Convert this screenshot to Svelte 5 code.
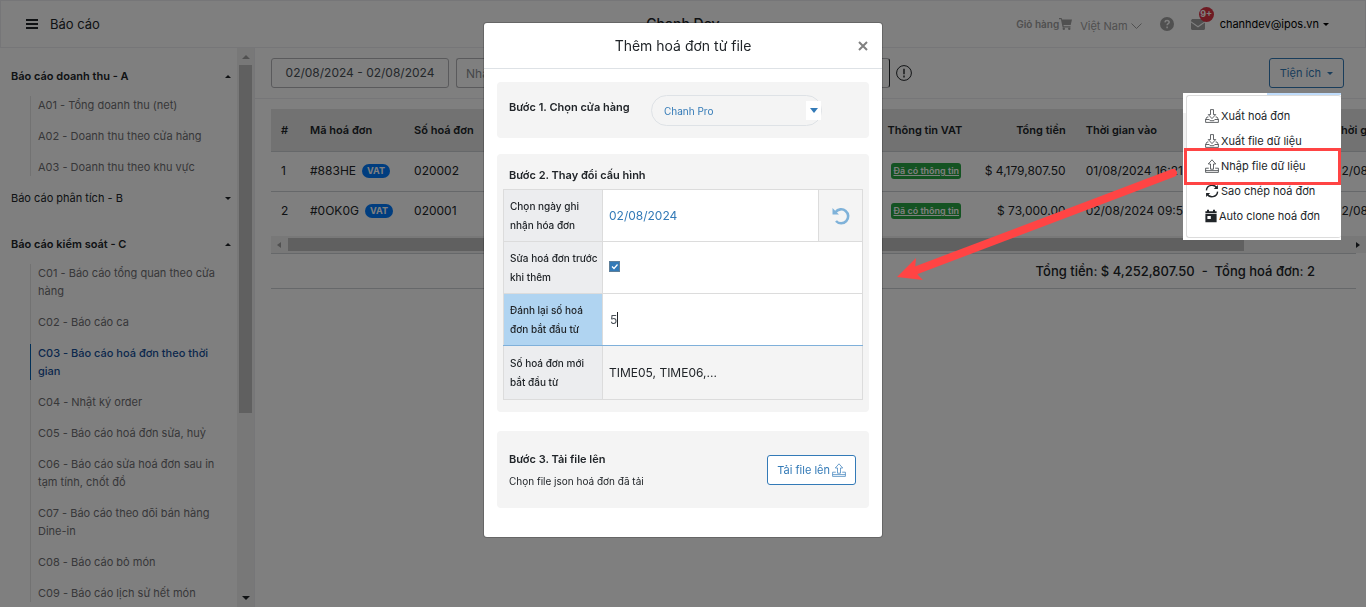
<script>
  const sections = [
    {
      title: 'Báo cáo doanh thu - A',
      open: true,
      items: ['A01 - Tổng doanh thu (net)', 'A02 - Doanh thu theo cửa hàng', 'A03 - Doanh thu theo khu vực']
    },
    { title: 'Báo cáo phân tích - B', open: false, items: [] },
    {
      title: 'Báo cáo kiểm soát - C',
      open: true,
      items: [
        'C01 - Báo cáo tổng quan theo cửa hàng',
        'C02 - Báo cáo ca',
        'C03 - Báo cáo hoá đơn theo thời gian',
        'C04 - Nhật ký order',
        'C05 - Báo cáo hoá đơn sửa, huỷ',
        'C06 - Báo cáo sửa hoá đơn sau in tạm tính, chốt đồ',
        'C07 - Báo cáo theo dõi bán hàng Dine-in',
        'C08 - Báo cáo bỏ món',
        'C09 - Báo cáo lịch sử hết món'
      ]
    }
  ];
  const active = 'C03 - Báo cáo hoá đơn theo thời gian';

  const rows = [
    { code: '#883HE', number: '020002', total: '$ 4,179,807.50', timeIn: '01/08/2024 16:21', timeOut: '02/08/2024 09:54' },
    { code: '#0OK0G', number: '020001', total: '$ 73,000.00', timeIn: '02/08/2024 09:55', timeOut: '02/08/2024 09:55' }
  ];

  const tools = [
    { icon: 'download', label: 'Xuất hoá đơn' },
    { icon: 'download', label: 'Xuất file dữ liệu' },
    { icon: 'upload', label: 'Nhập file dữ liệu', marked: true },
    { icon: 'sync', label: 'Sao chép hoá đơn' },
    { icon: 'calendar', label: 'Auto clone hoá đơn' }
  ];

  let editBefore = $state(true);
  let startNumber = $state('5');
</script>

{#snippet icon(name)}
  {#if name === 'download'}
    <svg class="ico" viewBox="0 0 14 14" fill="none" stroke="currentColor" stroke-width="0.7">
      <path d="M5.500 .6h3v5h2.200L7 9.600 3.300 5.600h2.200z" />
      <path d="M3.400 8H2L.6 10.500v2.900h12.800v-2.900L12 8h-1.400M.6 10.500h3.600l1 1.200h3.600l1-1.200h3.600" />
    </svg>
  {:else if name === 'upload'}
    <svg class="ico" viewBox="0 0 14 14" fill="none" stroke="currentColor" stroke-width="0.7">
      <path d="M5.500 10.200V5H3.300L7 .8 10.700 5H8.500v5.200z" />
      <path d="M3.800 9.200H.6v4.200h12.800V9.200h-3.200M.6 11.600h12.800" />
    </svg>
  {:else if name === 'sync'}
    <svg class="ico" viewBox="0 0 14 14" fill="none" stroke="currentColor" stroke-width="1.400">
      <path d="M1.400 6.400A5.600 5.600 0 0 1 12 4.400M12.600 7.600A5.600 5.600 0 0 1 2 9.600" />
      <path d="M12.900 1v4.100H8.800zM1.100 13V8.900h4.100z" fill="currentColor" stroke="none" />
    </svg>
  {:else}
    <svg class="ico narrow" viewBox="1 0 12 14" fill="currentColor">
      <path fill-rule="evenodd" d="M3 .8h2v1.400h4V.8h2v1.400h1.600V4H1.400V2.200H3zM1.400 4.800h11.200v8.400H1.400zM3.400 7v3h3.400V7z" />
    </svg>
  {/if}
{/snippet}

<div class="page">
  <header class="topbar">
    <div class="side">
      <button class="plain" aria-label="Menu">
        <svg class="burger" viewBox="0 0 12 12" stroke="#212529" stroke-width="2"><path d="M0 2h12M0 6h12M0 10h12" /></svg>
      </button>
      <span class="crumb">Báo cáo</span>
    </div>
    <h1>Chanh Dev</h1>
    <div class="side end">
      <a class="cart" href="#cart">Giỏ hàng<svg viewBox="0 0 13 12" fill="currentColor"><path d="M0 0h2.600l.4 1.500H13L11.700 7H4.500l.2 1.200h6.800v1.300H3.600L1.900 1.300H0z" /><circle cx="4.800" cy="10.800" r="1.200" /><circle cx="10.300" cy="10.800" r="1.200" /></svg></a>
      <button class="plain lang">Việt Nam<svg viewBox="0 0 11 6" fill="none" stroke="currentColor"><path d="M.5.5l5 5 5-5" /></svg></button>
      <button class="plain help" aria-label="Trợ giúp">
        <svg viewBox="0 0 14 14"><circle cx="7" cy="7" r="7" fill="currentColor" /><path d="M4.900 5.300C5.200 3.800 6 3.500 7 3.500c1.300 0 2.200.8 2.200 1.800C9.200 6.700 7.200 6.700 7.100 8.200M7.100 9.500v1.800" fill="none" stroke="#fff" stroke-width="1.500" /></svg>
      </button>
      <button class="plain mail" aria-label="Thư">
        <svg viewBox="0 0 14 11" fill="currentColor"><path d="M1.200 0h11.600L14 1.200v1L7 7 0 2.200v-1z" /><path d="M0 3.600l7 4.800 7-4.800V10l-1 1H1l-1-1z" /></svg>
        <span class="count">9+</span>
      </button>
      <button class="plain user">chanhdev@ipos.vn<i class="caret"></i></button>
    </div>
  </header>

  <div class="body">
    <nav class="sidebar">
      <div class="menu">
        {#each sections as section}
          <section>
            <button class="plain group" class:open={section.open}>
              {section.title}<i class="caret" class:up={section.open}></i>
            </button>
            {#if section.items.length}
              <ul>
                {#each section.items as item}
                  <li class:active={item === active}><a href="#report">{item}</a></li>
                {/each}
              </ul>
            {/if}
          </section>
        {/each}
      </div>
      <div class="vbar"><i class="caret up dim"></i><div class="thumb"></div><i class="caret"></i></div>
    </nav>

    <main>
      <div class="filters">
        <button class="field dates">02/08/2024 - 02/08/2024</button>
        <input class="field search" placeholder="Nhập mã hoá đơn" aria-label="Mã hoá đơn" />
        <button class="plain info" aria-label="Thông tin">
          <svg viewBox="0 0 16 16" fill="none" stroke="#212529"><circle cx="8" cy="8" r="7.400" stroke-width="1" /><path d="M8 3.800v5.400M8 10.600v1.800" stroke-width="1.400" /></svg>
        </button>
        <div class="tools">
          <button class="outline tool-btn">Tiện ích<i class="caret"></i></button>
          <div class="popup">
            <div class="ring"></div>
            <div class="popup-box">
              {#each tools as tool}
                <button class="plain entry">{@render icon(tool.icon)}{tool.label}
                  {#if tool.marked}<span class="mark"></span>{/if}
                </button>
              {/each}
            </div>
          </div>
        </div>
      </div>

      <div class="results">
        <div class="scroller">
          <table class="bills">
            <colgroup><col class="c-index" /><col class="c-code" /><col class="c-number" /><col class="c-blank" /><col class="c-vat" /><col class="c-total" /><col class="c-time" /><col class="c-time" /><col class="c-time" /></colgroup>
            <thead>
              <tr><th>#</th><th>Mã hoá đơn</th><th>Số hoá đơn</th><th></th><th>Thông tin VAT</th><th class="right">Tổng tiền</th><th>Thời gian vào</th><th></th><th>Thời gian ra</th></tr>
            </thead>
            <tbody>
              {#each rows as row, i}
                <tr>
                  <td>{i + 1}</td>
                  <td>{row.code}<span class="vat">VAT</span></td>
                  <td>{row.number}</td>
                  <td></td>
                  <td><a class="has-info" href="#vat">Đã có thông tin</a></td>
                  <td class="right">{row.total}</td>
                  <td>{row.timeIn}</td>
                  <td></td>
                  <td>{row.timeOut}</td>
                </tr>
              {/each}
            </tbody>
          </table>
        </div>
        <div class="hbar"><i class="caret left dim"></i><div class="thumb"></div><i class="caret rightward"></i></div>
        <p class="sum">Tổng tiền: $ 4,252,807.50 &nbsp;-&nbsp; Tổng hoá đơn: 2</p>
      </div>
    </main>
  </div>
</div>

<div class="backdrop">
  <div class="modal" role="dialog" aria-labelledby="dialog-title">
    <div class="modal-head">
      <h2 id="dialog-title">Thêm hoá đơn từ file</h2>
      <button class="plain close" aria-label="Đóng">
        <svg viewBox="0 0 10 10" stroke="#808080" stroke-width="2"><path d="M1 1l8 8M9 1L1 9" /></svg>
      </button>
    </div>
    <div class="modal-body">
      <section class="card step1">
        <label for="store">Bước 1. Chọn cửa hàng</label>
        <div class="select">
          <select id="store"><option>Chanh Pro</option></select>
          <span class="select-arrow"><i class="caret big"></i></span>
        </div>
      </section>

      <section class="card step2">
        <h3>Bước 2. Thay đổi cấu hình</h3>
        <table class="config">
          <tbody>
            <tr>
              <th><label for="day">Chọn ngày ghi nhận hóa đơn</label></th>
              <td>
                <div class="day">
                  <input id="day" class="bare blue" value="02/08/2024" />
                  <button class="plain undo" aria-label="Đặt lại">
                    <svg viewBox="0 0 18 18" fill="none" stroke="#7fb2d9" stroke-width="2.600"><path d="M3.500 5.200A7 7 0 1 1 4 14" /><path d="M.5 1v6.500H7L4.600 5.200z" fill="#7fb2d9" stroke="none" /></svg>
                  </button>
                </div>
              </td>
            </tr>
            <tr>
              <th><label for="edit">Sửa hoá đơn trước khi thêm</label></th>
              <td><input id="edit" class="tick" type="checkbox" bind:checked={editBefore} /></td>
            </tr>
            <tr class="focus">
              <th><label for="start">Đánh lại số hoá đơn bắt đầu từ</label></th>
              <td><div class="typing"><input id="start" class="bare" size="1" bind:value={startNumber} /></div></td>
            </tr>
            <tr class="result">
              <th>Số hoá đơn mới bắt đầu từ</th>
              <td>TIME05, TIME06,...</td>
            </tr>
          </tbody>
        </table>
      </section>

      <section class="card step3">
        <div>
          <h3>Bước 3. Tải file lên</h3>
          <p>Chọn file json hoá đơn đã tải</p>
        </div>
        <button class="outline upload">Tải file lên{@render icon('upload')}</button>
      </section>
    </div>
  </div>
</div>

<svg class="arrow" viewBox="0 0 286 119" fill="#ff4444">
  <path d="M276 8L20 105" stroke="#ff4444" stroke-width="8" stroke-linecap="round" />
  <path d="M0 112L19 93l-1 11 3 6 5 5z" />
</svg>

<style>
  :global(body) {
    margin: 0;
    overflow: hidden;
    background: #fff;
    color: #212529;
    font: 12px/18px Inter, "Liberation Sans", sans-serif;
  }
  * { box-sizing: border-box; }
  h1, h2, h3, p, ul { margin: 0; padding: 0; }
  a { color: inherit; text-decoration: none; }
  input, select, button { font: inherit; color: inherit; margin: 0; }
  .plain { border: 0; background: none; padding: 0; display: flex; align-items: center; }
  .outline {
    display: flex;
    align-items: center;
    height: 30px;
    padding: 0 10px;
    border: 1px solid #337ab7;
    border-radius: 3px;
    background: #fff;
    color: #337ab7;
    font-size: 11px;
  }
  .ico { width: 14px; height: 14px; flex: none; }
  .ico.narrow { width: 12px; }
  .caret {
    display: inline-block;
    flex: none;
    border: 3px solid transparent;
    border-top-color: currentColor;
    border-bottom: 0;
  }
  .caret.up { transform: rotate(180deg); }
  .caret.left { transform: rotate(90deg); }
  .caret.rightward { transform: rotate(-90deg); }
  .caret.big { border-width: 5px 4px 0; }
  .dim { color: #a3a3a3; }

  .page { display: flex; flex-direction: column; height: 100vh; }
  .topbar {
    display: flex;
    align-items: center;
    height: 48px;
    padding: 0 25px;
    border: 1px solid #ececf0;
    flex: none;
  }
  .side { flex: 1 1 0; display: flex; align-items: center; gap: 12px; }
  .end { justify-content: flex-end; gap: 0; color: #a0a0a0; font-size: 11px; }
  .burger { width: 12px; height: 12px; }
  .crumb { font-size: 13px; }
  h1 { font-size: 14px; font-weight: 500; }
  .cart { display: flex; align-items: center; font-size: 10px; font-weight: 600; }
  .cart svg { width: 13px; height: 12px; }
  .lang { margin-left: 8px; padding-top: 3px; gap: 3px; }
  .lang svg { width: 11px; height: 6px; }
  .help { margin-left: 18px; }
  .help svg { width: 14px; height: 14px; }
  .mail { position: relative; margin-left: 17px; }
  .mail svg { width: 14px; height: 11px; }
  .count {
    position: absolute;
    left: 8px;
    bottom: 8px;
    width: 15px;
    height: 15px;
    border-radius: 50%;
    background: #dc3545;
    color: #fff;
    font-size: 9px;
    font-weight: 700;
    line-height: 14px;
  }
  .user { margin: 0 11px 0 15px; gap: 4px; color: #000; font-size: 11px; }

  .body { flex: 1; display: flex; min-height: 0; }
  .sidebar { display: flex; flex: none; width: 255px; border-right: 1px solid #ececf0; }
  .menu { flex: 1; overflow: hidden; padding: 19px 6px 0 11px; }
  .group { justify-content: space-between; width: 100%; font-size: 11px; }
  .group.open { font-weight: 600; }
  .menu section { margin-bottom: 28px; }
  .menu section:first-child { margin-bottom: 13px; }
  .menu ul { list-style: none; margin: 11px 8px 0 19px; border-left: 1px solid #e4e4e4; color: #6f6f73; font-size: 11px; }
  .menu li { padding-left: 7px; margin-bottom: 13px; }
  .menu li:last-child { margin-bottom: 0; }
  .menu .active { margin-left: -1px; border-left: 1px solid #005fae; color: #16509a; font-weight: 500; }
  .vbar {
    display: flex;
    flex-direction: column;
    align-items: center;
    width: 17px;
    padding: 7px 0;
    background: #f1f1f1;
  }
  .vbar .thumb { width: 13px; flex: 0 0 348px; margin-top: 6px; background: #c1c1c1; }
  .vbar .caret:last-child { margin-top: auto; border-width: 4px 4px 0; }
  .vbar .caret:first-child { border-width: 4px 4px 0; }

  main { flex: 1; min-width: 0; }
  .filters {
    display: flex;
    align-items: center;
    height: 51px;
    padding: 0 22px 0 16px;
    border-bottom: 1px solid #ececf0;
  }
  .field { height: 30px; border: 1px solid #b5b5b9; border-radius: 3px; background: #fff; color: #495057; }
  .dates { width: 178px; padding: 0; margin-right: 7px; }
  .search { width: 434px; padding: 0 9px; border-right-color: #212529; }
  .search::placeholder { color: #8b8f94; }
  .info { margin-left: 6px; }
  .info svg { width: 16px; height: 16px; }
  .tools { position: relative; margin-left: auto; }
  .tool-btn { gap: 6px; }
  .popup {
    position: absolute;
    z-index: 3;
    top: 35px;
    right: 3px;
    width: 158px;
    height: 147px;
    padding: 2px 0 2px 3px;
    background: linear-gradient(#fff 20px, #f1f1f1 20px 59px, #fff 59px);
    overflow: hidden;
  }
  .ring { position: absolute; top: 0; right: 0; width: 74px; height: 2px; background: #bfdcfb; }
  .popup-box { height: 143px; padding: 7px 0 0 18px; border: 1px solid #dcdcdc; border-right: 0; border-radius: 3px; background: #fff; font-size: 11px; }
  .entry { height: 25px; gap: 2px; white-space: nowrap; }
  .mark { position: absolute; left: 1px; top: 55px; width: 157px; height: 37px; border: 3px solid #ff4444; }

  .results { padding: 10px 0 0 16px; }
  .scroller { overflow: hidden; }
  .bills { width: 1177px; table-layout: fixed; border-collapse: collapse; }
  .c-index { width: 29px; }
  .c-code { width: 104px; }
  .c-number { width: 100px; }
  .c-blank { width: 373px; }
  .c-vat { width: 94px; }
  .c-total { width: 104px; }
  .c-time { width: 124px; }
  .bills th { height: 42px; padding: 0 10px; background: #e4e4e4; border-bottom: 1px solid #ccd0d4; text-align: left; font-weight: 600; font-size: 11px; white-space: nowrap; }
  .bills td { height: 40px; padding: 0 10px; border-bottom: 1px solid #ccd0d4; white-space: nowrap; }
  .bills tr:last-child td { border-bottom: 0; }
  .bills .right { text-align: right; }
  .vat {
    display: inline-block;
    margin-left: 6px;
    padding: 0 5px;
    border-radius: 7px;
    background: #007bff;
    color: #fff;
    font-size: 9px;
    font-weight: 700;
    line-height: 14px;
    vertical-align: 1px;
  }
  .has-info {
    display: inline-block;
    margin-left: 4px;
    padding: 0 2px;
    border-radius: 3px;
    background: #28a745;
    color: #fff;
    font-size: 9px;
    font-weight: 600;
    line-height: 16px;
    text-decoration: underline;
    vertical-align: 1px;
  }
  .hbar { display: flex; align-items: center; height: 17px; margin-top: 5px; padding: 0 5px; background: #f1f1f1; }
  .hbar .thumb { flex: 0 0 956px; height: 13px; margin-left: 6px; background: #c1c1c1; }
  .hbar .caret { border-width: 4px 3px 0; }
  .hbar .caret:last-child { margin-left: auto; }
  .sum {
    margin-right: 10px;
    padding: 0 41px;
    border: solid #ccd0d4;
    border-width: 1px 0;
    line-height: 34px;
    font-size: 13px;
    font-weight: 500;
    text-align: right;
  }

  .backdrop {
    position: fixed;
    inset: 0;
    z-index: 2;
    display: flex;
    justify-content: center;
    align-items: flex-start;
    padding-top: 23px;
    background: rgba(0, 0, 0, 0.5);
  }
  .modal { width: 398px; background: #fff; border-radius: 3px; box-shadow: 0 0 0 1px rgba(0, 0, 0, 0.2); }
  .modal-head { position: relative; height: 46px; border-bottom: 1px solid #dee2e6; text-align: center; }
  h2 { font-size: 14px; font-weight: 400; line-height: 45px; }
  .close { position: absolute; right: 14px; top: 18px; }
  .close svg { width: 10px; height: 10px; }
  .modal-body { padding: 13px 13px 29px; }
  .card { background: #f4f4f4; border-radius: 4px; }
  h3, .step1 label { font-size: 11px; font-weight: 600; }
  .step1 { display: flex; align-items: flex-start; justify-content: space-between; height: 56px; padding: 13px 47px 0 12px; margin-bottom: 16px; }
  .step1 label { padding-top: 3px; }
  .select { position: relative; width: 171px; }
  .select select {
    appearance: none;
    width: 100%;
    height: 31px;
    padding: 0 12px;
    border: 1px solid #dee2e6;
    border-radius: 16px;
    background: transparent;
    color: #337ab7;
    font-size: 10px;
  }
  .select-arrow {
    position: absolute;
    right: 1px;
    top: 6px;
    display: flex;
    align-items: center;
    justify-content: center;
    width: 15px;
    height: 19px;
    background: #fff;
    color: #337ab7;
    pointer-events: none;
  }
  .step2 { padding: 12px 6px; margin-bottom: 19px; }
  .step2 h3 { padding-left: 6px; margin-bottom: 5px; }
  .config { width: 100%; border-collapse: collapse; table-layout: fixed; background: #fff; }
  .config th, .config td { border: 1px solid #dcdcdc; height: 52px; }
  .config th { width: 99px; padding: 1px 3px 0 6px; background: #ecedef; text-align: left; font-size: 10px; font-weight: 500; line-height: 19px; }
  .config td { padding: 0 6px; }
  .config td:has(.day) { padding: 0; }
  .day { display: flex; height: 51px; }
  .bare { flex: 1; min-width: 0; border: 0; padding: 0; background: none; outline: none; }
  .day .bare { padding-left: 6px; }
  .blue { color: #337ab7; }
  .undo { width: 44px; justify-content: center; border-left: 1px solid #dcdcdc; background: #f4f4f4; }
  .undo svg { width: 18px; height: 18px; }
  .tick {
    appearance: none;
    display: block;
    width: 11px;
    height: 11px;
    margin-top: -2px;
    border: 1px solid #5f7f99;
    background: #337ab7 url("data:image/svg+xml,%3Csvg xmlns='http://www.w3.org/2000/svg' viewBox='0 0 9 9'%3E%3Cpath d='M2 4.500l2 2 3.500-4' fill='none' stroke='white' stroke-width='1.200'/%3E%3C/svg%3E") center no-repeat;
  }
  .typing { display: flex; padding-left: 1px; }
  .typing .bare { flex: none; width: 8px; color: #495057; border-right: 1px solid #212529; height: 15px; }
  .focus th { background: #b0d4f1; }
  .config .focus th, .config .focus td { border-bottom: 1px solid #7fb0da; }
  .result td { background: #f4f4f4; }
  .config .result th, .config .result td { height: 54px; border-top-color: #7fb0da; }
  .step3 { display: flex; align-items: center; justify-content: space-between; height: 77px; padding: 0 13px 0 12px; }
  .step3 p { margin-top: 4px; font-size: 10px; }
  .upload { gap: 2px; padding: 0 9px; }

  .arrow { position: fixed; z-index: 4; top: 165px; right: 183px; width: 286px; height: 119px; pointer-events: none; }
</style>
